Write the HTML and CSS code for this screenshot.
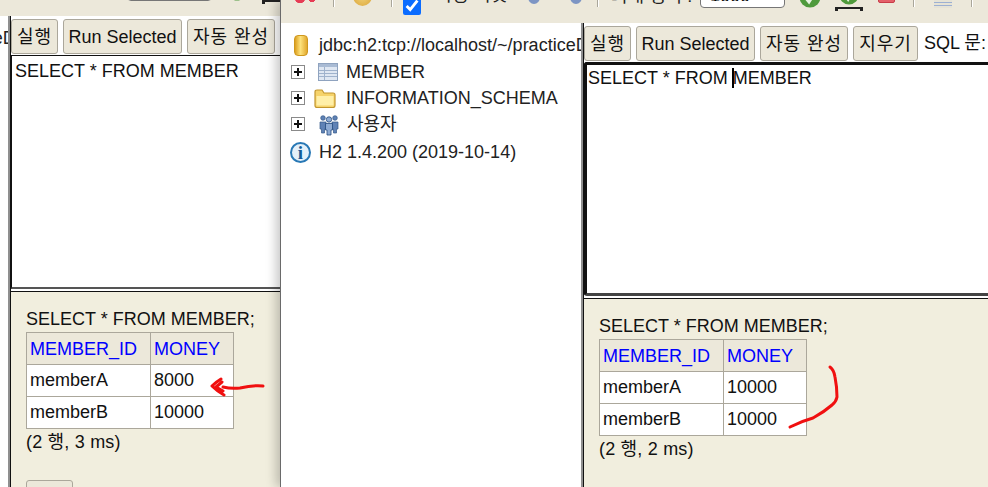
FILE: index.html
```html
<!DOCTYPE html>
<html lang="ko">
<head>
<meta charset="utf-8">
<title>H2 Console</title>
<link rel="stylesheet" href="styles.css">
</head>
<body>
<svg width="0" height="0" class="defs">
  <defs>
    <symbol id="i-table" viewBox="0 0 20 18">
      <rect x="0.5" y="0.5" width="19" height="17" fill="#dfe7f2" stroke="#8fa3bf"/>
      <rect x="1" y="1" width="18" height="3" fill="#a9bbd4"/>
      <path d="M1 7.500h18M1 10.500h18M1 13.500h18M6.500 4v13" stroke="#9fb2cc" fill="none"/>
    </symbol>
    <symbol id="i-folder" viewBox="0 0 22 19">
      <path d="M1 16.500V3q0-2 2-2h5l2 3h9q2 0 2 2v10.500q0 2-2 2H3q-2 0-2-2z" fill="#f6d36a" stroke="#c2962f" stroke-width="1.200"/>
      <path d="M2.500 7h17v9.500h-17z" fill="#ffefa8"/>
    </symbol>
    <symbol id="i-users" viewBox="0 0 20 22">
      <g fill="#5f82b5" stroke="#35598a" stroke-width=".7">
        <circle cx="4" cy="5" r="2.300"/><circle cx="16" cy="5" r="2.300"/>
        <path d="M1 9h6v7H5.500v4h-3v-4H1zM13 9h6v7h-1.500v4h-3v-4H13z"/>
      </g>
      <g fill="#8eabd3" stroke="#234a7d" stroke-width=".8">
        <circle cx="10" cy="6.500" r="2.700"/>
        <path d="M6.500 10.500h7v6.500H12v5H8v-5H6.500z"/>
      </g>
    </symbol>
    <symbol id="i-green" viewBox="0 0 22 22">
      <circle cx="11" cy="11" r="10.500" fill="#4f9a3c"/>
      <path d="M6 11l4 5 7-11" stroke="#e8f3e2" stroke-width="3" fill="none"/>
    </symbol>
  </defs>
</svg>

<section class="window window-left">
  <div class="page">
    <div class="toolbar">
      <span class="tool-red"></span><span class="sep sep-a"></span><span class="tool-gold"></span><span class="sep sep-b"></span>
      <input class="check" type="checkbox" checked><span class="tool-text text-auto">자동 커밋</span>
      <span class="tool-blue blue-a"></span><span class="tool-blue blue-b"></span><span class="sep sep-c"></span>
      <span class="tool-text text-max">최대 행 수:</span>
      <select class="max-rows"><option>1000</option></select>
      <svg class="tool-go"><use href="#i-green"/></svg>
      <span class="tool-commit"><svg class="commit-mark"><use href="#i-green"/></svg><span class="commit-bar"></span></span>
      <span class="tool-stop"></span><span class="sep sep-d"></span>
      <span class="tool-lines"></span><span class="sep sep-e"></span>
    </div>
    <div class="main">
      <nav class="tree">
        <div class="tree-row row-db">
          <span class="db"></span><span class="tree-text">jdbc:h2:tcp://localhost/~/practiceDB</span>
        </div>
      </nav>
      <div class="divider"></div>
      <div class="query">
        <div class="buttons">
          <button class="btn btn-run">실행</button><button class="btn btn-sel">Run Selected</button><button class="btn btn-auto">자동 완성</button><button class="btn btn-clear">지우기</button>
        </div>
        <div class="sql">SELECT * FROM MEMBER</div>
        <div class="result">
          <div class="stmt">SELECT * FROM MEMBER;</div>
          <table class="grid">
            <thead><tr><th class="col-id">MEMBER_ID</th><th class="col-money">MONEY</th></tr></thead>
            <tbody>
              <tr><td>memberA</td><td>8000</td></tr>
              <tr><td>memberB</td><td>10000</td></tr>
            </tbody>
          </table>
          <div class="stat">(2 행, 3 ms)</div>
          <button class="btn btn-edit">편집</button>
        </div>
      </div>
    </div>
  </div>
</section>

<section class="window window-right">
  <div class="page">
    <div class="toolbar">
      <span class="tool-red"></span><span class="sep sep-a"></span><span class="tool-gold"></span><span class="sep sep-b"></span>
      <input class="check" type="checkbox" checked><span class="tool-text text-auto">자동 커밋</span>
      <span class="tool-blue blue-a"></span><span class="tool-blue blue-b"></span><span class="sep sep-c"></span>
      <span class="tool-text text-max">최대 행 수:</span>
      <select class="max-rows"><option>1000</option></select>
      <svg class="tool-go"><use href="#i-green"/></svg>
      <span class="tool-commit"><svg class="commit-mark"><use href="#i-green"/></svg><span class="commit-bar"></span></span>
      <span class="tool-stop"></span><span class="sep sep-d"></span>
      <span class="tool-lines"></span><span class="sep sep-e"></span>
    </div>
    <div class="main">
      <nav class="tree">
        <div class="tree-row row-db">
          <span class="db"></span><span class="tree-text">jdbc:h2:tcp://localhost/~/practiceDB</span>
        </div>
        <div class="tree-row">
          <span class="plus"></span><svg class="ico ico-table"><use href="#i-table"/></svg><span class="tree-text">MEMBER</span>
        </div>
        <div class="tree-row">
          <span class="plus"></span><svg class="ico ico-folder"><use href="#i-folder"/></svg><span class="tree-text">INFORMATION_SCHEMA</span>
        </div>
        <div class="tree-row">
          <span class="plus"></span><svg class="ico ico-users"><use href="#i-users"/></svg><span class="tree-text">사용자</span>
        </div>
        <div class="tree-row row-info">
          <span class="info">i</span><span class="tree-text">H2 1.4.200 (2019-10-14)</span>
        </div>
      </nav>
      <div class="divider"></div>
      <div class="query">
        <div class="buttons">
          <button class="btn btn-run">실행</button><button class="btn btn-sel">Run Selected</button><button class="btn btn-auto">자동 완성</button><button class="btn btn-clear">지우기</button><span class="sql-label">SQL 문:</span>
        </div>
        <div class="sql sql-focus">SELECT * FROM <span class="caret"></span>MEMBER</div>
        <div class="result">
          <div class="stmt">SELECT * FROM MEMBER;</div>
          <table class="grid">
            <thead><tr><th class="col-id">MEMBER_ID</th><th class="col-money">MONEY</th></tr></thead>
            <tbody>
              <tr><td>memberA</td><td>10000</td></tr>
              <tr><td>memberB</td><td>10000</td></tr>
            </tbody>
          </table>
          <div class="stat">(2 행, 2 ms)</div>
        </div>
      </div>
    </div>
  </div>
</section>

<svg class="ink" viewBox="0 0 988 487" width="988" height="487">
  <path d="M263 386q-10-1-23 2q-9 1-17-1M221 379q-5 3-9 7q5 5 12 9M222 382l-6 5l7 4"/>
  <path d="M830 367q4 3 5 10q2 10 2 20q-1 5-5 8q-8 7-19 13q-11 3-23 9"/>
</svg>
</body>
</html>
```
FILE: styles.css
```css
* { box-sizing: border-box; }
html, body { margin: 0; height: 487px; overflow: hidden; background: #fff; }
body { position: relative; font: 18px/22px "Liberation Sans", "Noto Sans CJK KR", sans-serif; color: #111; }
.defs { position: absolute; }

/* two overlapping browser windows showing the same console */
.window { position: absolute; top: 0; height: 487px; overflow: hidden; background: #fff; }
.window-left { left: 0; width: 281px; }
.window-left .page { margin-left: -573px; margin-top: -7px; }
.window-right { left: 281px; width: 707px; box-shadow: -1px 0 0 #6a6a6a, -5px 0 10px rgba(0,0,0,.22); }
.window-right .page { margin-left: -281px; }
.page { width: 988px; height: 494px; display: flex; flex-direction: column; }

/* toolbar, cut off by the top of the screenshot */
.toolbar { flex: none; height: 23px; background: #ece8da; display: flex; align-items: flex-end; padding: 0 0 15px 295px; overflow: hidden; }
.toolbar > * { flex: none; }
.sep { width: 1px; height: 20px; background: #a9a69a; margin-bottom: 1px; box-shadow: 1px 0 0 #fff; }
.sep-a { margin-left: 18px; }
.sep-b { margin-left: 19px; }
.sep-c { margin-left: 15px; }
.sep-d { margin-left: 18px; }
.sep-e { margin-left: 19px; }
.tool-red { width: 20px; height: 20px; margin-bottom: 5px; background:
  radial-gradient(circle at 5px 15px, #e63c55 5px, transparent 5.500px),
  radial-gradient(circle at 17px 16px, #e63c55 3px, transparent 3.500px); }
.tool-gold { width: 19px; height: 20px; margin: 0 0 2px 19px; border-radius: 0 0 50% 50%; background: radial-gradient(ellipse at 50% 30%, #f7dd8a, #dfae45 80%); }
.check { width: 18px; height: 18px; margin: 0 0 -7px 11px; accent-color: #0b6cff; }
.tool-text { line-height: 20px; white-space: nowrap; color: #222; }
.text-auto { width: 66px; margin: 0 0 3px 15px; }
.text-max { width: 84px; margin: 0 0 2px 13px; }
.tool-blue { width: 12px; height: 14px; border-radius: 50%; background: #7d95c4; margin-bottom: 4px; }
.blue-a { margin-left: 26px; }
.blue-b { margin-left: 30px; }
.max-rows { width: 85px; height: 24px; margin: 0 0 0 5px; padding: 0 0 6px 5px; font: 18px "Liberation Sans", sans-serif; background: #fff; border: 1px solid #767676; border-radius: 4px; }
.tool-go { width: 22px; height: 22px; margin-left: 14px; }
.tool-commit { width: 28px; margin: 0 0 -3px 14px; display: flex; flex-direction: column; align-items: center; }
.commit-mark { display: block; width: 20px; height: 22px; margin-bottom: 1px; }
.commit-bar { width: 100%; height: 4px; border: 3px solid #222; border-width: 2px 3px 0; }
.tool-stop { width: 17px; height: 14px; margin: 0 0 5px 15px; background: #e4606a; border: 1px solid #c83c48; border-radius: 2px; }
.tool-lines { width: 18px; height: 12px; margin-left: 20px; background: repeating-linear-gradient(#9db0d2 0 1px, #e6e3d6 1px 3px); }

/* main split */
.main { flex: 1; min-height: 0; display: flex; padding-left: 281px; background: #fff; }
.tree { flex: none; width: 300px; padding: 8px 0 0 8px; overflow: hidden; color: #222; }
.tree-row { height: 26px; display: flex; align-items: center; white-space: nowrap; }
.row-db { height: 28px; padding-left: 5px; }
.row-info { margin-top: 2px; padding-left: 1px; }
.tree-text { flex: none; }
.db { flex: none; width: 14px; height: 21px; margin-right: 11px; border-radius: 4px; background: linear-gradient(90deg, #dc9f1f, #fde27c 45%, #e2a92e); border: 1px solid #cf981e; }
.plus { flex: none; width: 14px; height: 14px; margin-left: 2px; border: 1px solid #8a8a8a; background:
  linear-gradient(#111, #111) center / 8px 2px no-repeat,
  linear-gradient(#111, #111) center / 2px 8px no-repeat, #fff; }
.ico { flex: none; }
.ico-table { width: 20px; height: 18px; margin: 0 8px 0 13px; }
.ico-folder { width: 22px; height: 19px; margin: 0 10px 0 9px; }
.ico-users { width: 20px; height: 24px; margin: 0 8px 0 14px; }
.info { flex: none; width: 21px; height: 21px; margin-right: 8px; border: 2px solid #2878b5; border-radius: 50%; background: #e3f0fa; color: #145a96; font: bold 19px/17px "Liberation Serif", serif; text-align: center; }

.divider { flex: none; width: 2px; background: #8f8f8f; }

.query { flex: 1; min-width: 0; display: flex; flex-direction: column; border-left: 1px solid #111; }
.buttons { flex: none; height: 39px; padding-top: 3px; display: flex; align-items: flex-start; gap: 5px; white-space: nowrap; }
.btn { flex: none; height: 35px; margin: 0; padding: 0; font: inherit; color: #111; background: #ece8da; border: 1px solid #aba79b; border-radius: 3px; }
.btn-run { width: 47px; letter-spacing: 1px; }
.btn-sel { width: 119px; }
.btn-auto { width: 88px; letter-spacing: 1px; }
.btn-clear { width: 65px; letter-spacing: 1px; }
.sql-label { margin-left: 1px; line-height: 35px; color: #111; }
.sql { flex: none; height: 234px; padding: 4px 3px; margin-bottom: 2px; background: #fff; border: 1px solid #111; border-right: 0; border-bottom: 2px solid #555; white-space: pre; }
.sql-focus { padding: 2px 1px; border: 3px solid #111; border-right: 0; border-bottom-color: #444; border-radius: 3px 0 0 3px; }
.caret { display: inline-block; width: 2px; height: 20px; margin: 0 -1px 0 -1px; vertical-align: -4px; background: #000; }

.result { flex: 1; min-height: 0; padding: 16px 0 0 15px; background: #f1eede; border-top: 1px solid #111; }
.stmt { height: 24px; white-space: nowrap; }
.grid { border-collapse: collapse; background: #fff; table-layout: fixed; width: 207px; }
.grid th, .grid td { padding: 0 0 0 3px; border: 1px solid #aba79b; text-align: left; font-weight: normal; height: 32px; }
.grid td { padding-bottom: 2px; }
.grid th { background: #ece8da; color: #00f; }
.col-id { width: 124px; }
.col-money { width: 83px; }
.stat { margin-top: 2px; letter-spacing: .2px; }
.btn-edit { display: block; width: 47px; margin-top: 27px; color: transparent; }

/* hand-drawn annotations on top of the windows */
.ink { position: absolute; left: 0; top: 0; pointer-events: none; }
.ink path { fill: none; stroke: #f01010; stroke-width: 3; stroke-linecap: round; stroke-linejoin: round; }
```
